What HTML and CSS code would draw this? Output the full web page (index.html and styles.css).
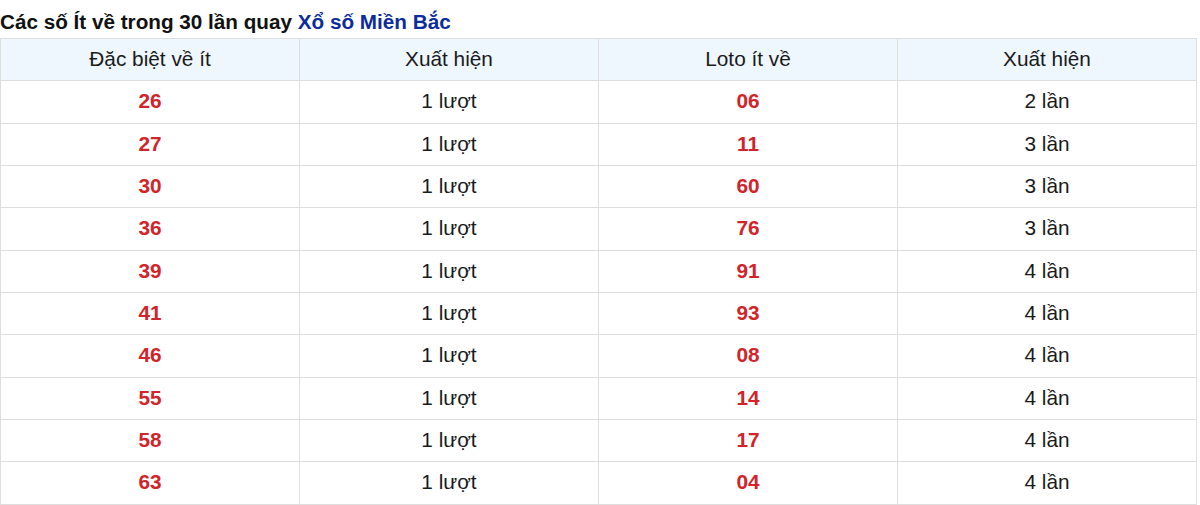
FILE: index.html
```html
<!DOCTYPE html>
<html lang="vi">
<head>
<meta charset="utf-8">
<link rel="stylesheet" href="styles.css">
</head>
<body>
<h2 class="title">Các số Ít về trong 30 lần quay <span class="region">Xổ số Miền Bắc</span></h2>
<table class="stats">
  <thead>
    <tr><th>Đặc biệt về ít</th><th>Xuất hiện</th><th>Loto ít về</th><th>Xuất hiện</th></tr>
  </thead>
  <tbody>
    <tr><td class="num">26</td><td>1 lượt</td><td class="num">06</td><td>2 lần</td></tr>
    <tr><td class="num">27</td><td>1 lượt</td><td class="num">11</td><td>3 lần</td></tr>
    <tr><td class="num">30</td><td>1 lượt</td><td class="num">60</td><td>3 lần</td></tr>
    <tr><td class="num">36</td><td>1 lượt</td><td class="num">76</td><td>3 lần</td></tr>
    <tr><td class="num">39</td><td>1 lượt</td><td class="num">91</td><td>4 lần</td></tr>
    <tr><td class="num">41</td><td>1 lượt</td><td class="num">93</td><td>4 lần</td></tr>
    <tr><td class="num">46</td><td>1 lượt</td><td class="num">08</td><td>4 lần</td></tr>
    <tr><td class="num">55</td><td>1 lượt</td><td class="num">14</td><td>4 lần</td></tr>
    <tr><td class="num">58</td><td>1 lượt</td><td class="num">17</td><td>4 lần</td></tr>
    <tr><td class="num">63</td><td>1 lượt</td><td class="num">04</td><td>4 lần</td></tr>
  </tbody>
</table>
</body>
</html>
```
FILE: styles.css
```css
html, body {
  margin: 0;
  padding: 0;
  background: #fff;
}
body {
  font-family: "Liberation Sans", Arial, sans-serif;
  font-size: 20.8px;
  color: #1a1a1a;
}
.title {
  margin: 0;
  padding: 10px 0 4px 0;
  font-size: 20.7px;
  line-height: 24px;
  font-weight: bold;
  color: #111;
}
.region {
  color: #0d2c9c;
}
.stats {
  width: 1197px;
  border-collapse: collapse;
  table-layout: fixed;
}
.stats th,
.stats td {
  border: 1px solid #dedede;
  height: 42.34px;
  padding: 0 0 1px 0;
  text-align: center;
  vertical-align: middle;
  box-sizing: border-box;
  line-height: 24px;
}
.stats th {
  background: #eef6fe;
  font-weight: normal;
  color: #1a1a1a;
}
.stats td.num {
  color: #d1242b;
  font-weight: bold;
}
```
